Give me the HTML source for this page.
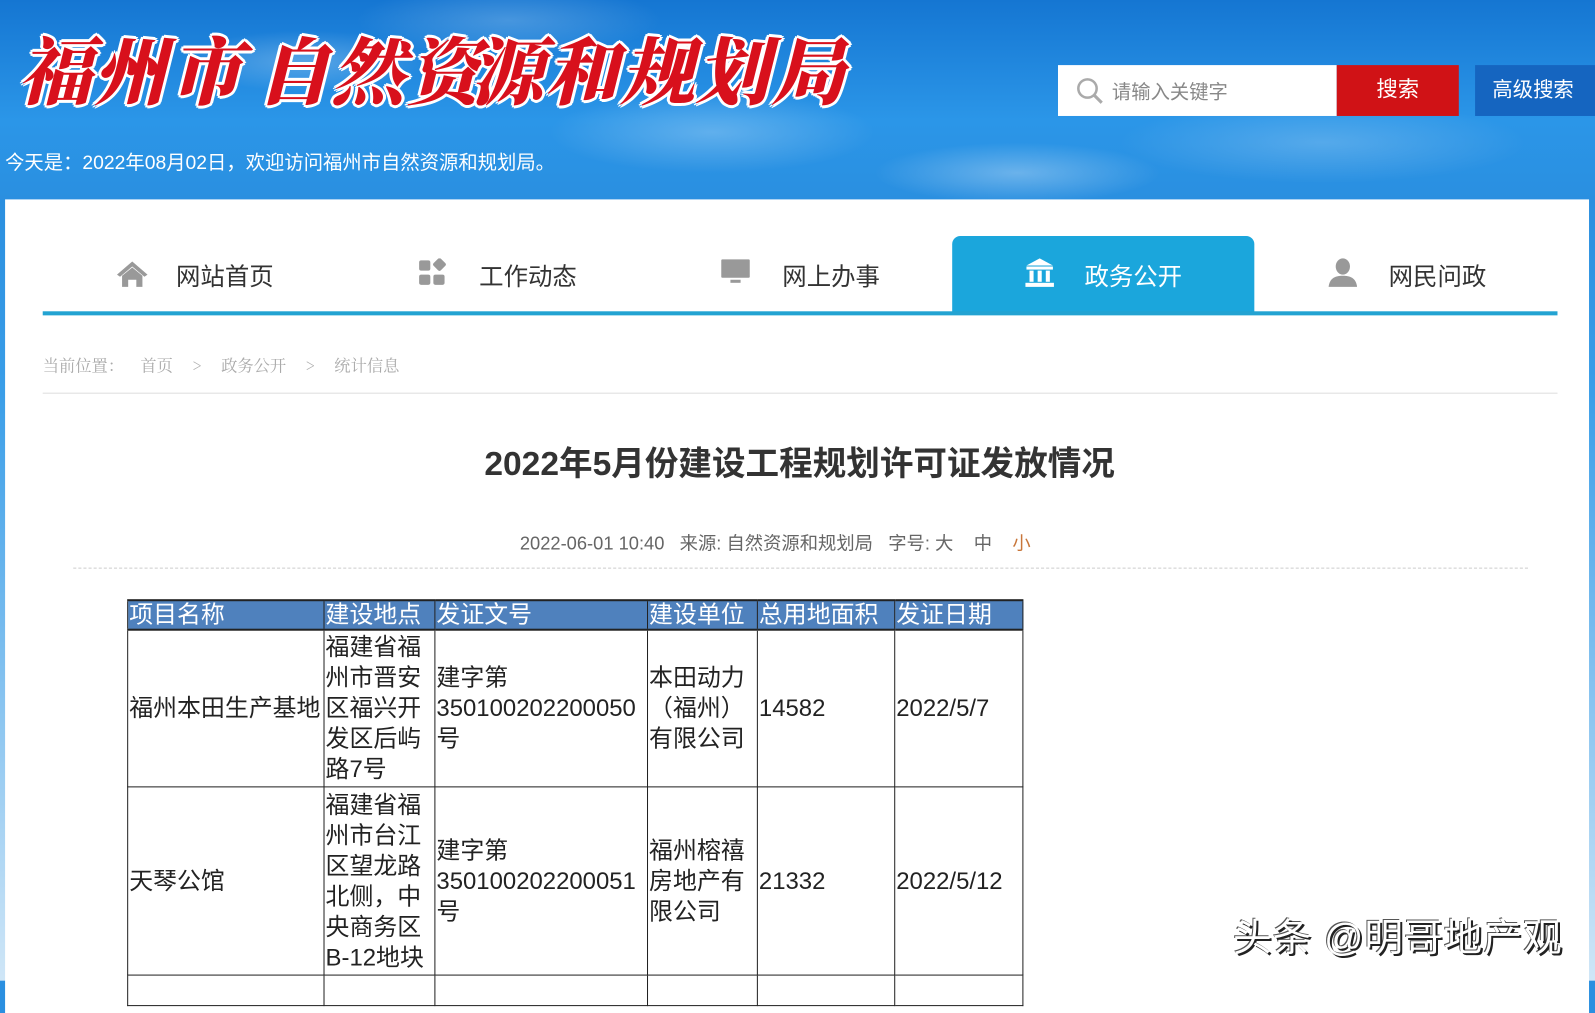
<!DOCTYPE html>
<html><head><meta charset="utf-8"><style>
*{margin:0;padding:0;box-sizing:border-box}
body{width:1595px;height:980px;overflow:hidden;position:relative;font-family:"Liberation Sans","Noto Sans CJK SC",sans-serif;background:#2a8fe0;}
#w{position:absolute;left:0;top:0;width:1568px;height:964px;transform:scale(1.0173);transform-origin:0 0;background:linear-gradient(180deg,#1a7fd6,#3a9ee8 40%,#cfe6f7);}
.hdr{position:absolute;left:0;top:0;width:1568px;height:197px;background:
radial-gradient(ellipse 120px 30px at 300px 60px,rgba(255,255,255,.25),transparent),
radial-gradient(ellipse 160px 40px at 700px 130px,rgba(255,255,255,.25),transparent),
radial-gradient(ellipse 140px 30px at 1000px 170px,rgba(255,255,255,.3),transparent),
radial-gradient(ellipse 200px 40px at 1300px 140px,rgba(255,255,255,.2),transparent),
radial-gradient(ellipse 150px 35px at 500px 20px,rgba(255,255,255,.2),transparent),
linear-gradient(180deg,#1576d2,#2b96e8 60%,#2a8fe0);}
.logo{position:absolute;top:14px;font-family:"Noto Serif CJK SC",serif;font-weight:900;font-size:72px;color:#d8101c;text-shadow:2px 2px 0 #fff,-2px -2px 0 #fff,2px -2px 0 #fff,-2px 2px 0 #fff,3px 0 0 #fff,-3px 0 0 #fff,0 3px 0 #fff,0 -3px 0 #fff;font-style:italic;letter-spacing:2px}
.today{position:absolute;left:5px;top:145px;color:#fff;font-size:19px}
.sbox{position:absolute;left:1040px;top:64px;width:274px;height:50px;background:#fff}
.sbox span{position:absolute;left:53px;top:12px;font-size:19px;color:#888}
.sbtn{position:absolute;left:1314px;top:64px;width:120px;height:50px;background:#d01216;color:#fff;font-size:21px;text-align:center;line-height:50px}
.adv{position:absolute;left:1450px;top:64px;width:145px;height:50px;background:#1565c0;color:#fff;font-size:20px;line-height:50px;padding-left:17px}
.main{position:absolute;left:5px;top:196px;width:1557px;height:800px;background:#fff}
.tab{position:absolute;top:252px;font-size:24px;color:#333}
.act{position:absolute;left:936px;top:232px;width:297px;height:76px;background:#1ba6dc;border-radius:8px 8px 0 0}
.uline{position:absolute;left:42px;top:306px;width:1489px;height:4px;background:#23a3d2}
.bc{position:absolute;left:42px;top:347px;font-family:"Noto Serif CJK SC",serif;font-size:16px;color:#aaa;word-spacing:0}
.bc i{font-style:normal;margin:0 19px}
.bl{position:absolute;left:42px;top:386px;width:1489px;height:1px;background:#ddd}
.title{position:absolute;left:0;width:1572px;text-align:center;top:429px;font-size:33px;font-weight:bold;color:#333}
.meta{position:absolute;left:511px;top:520px;font-size:18px;color:#666}
.dash{position:absolute;left:72px;top:558px;width:1430px;border-top:1px dashed #ccc}
table{position:absolute;left:125px;top:589px;border-collapse:collapse;font-size:23.5px;line-height:30px;color:#222}
td{border:1px solid #222;vertical-align:middle;padding:0 0 0 1px}
tr.h td{background:#4f81bd;color:#fff;height:29px;line-height:27px;border-top:2px solid #222;border-bottom:2px solid #222}
.wm{position:absolute;left:1212px;top:891px;font-size:38px;color:#fff;text-shadow:2px 2px 0 #222,-1px -1px 0 #555;letter-spacing:1px}
</style></head><body><div id="w">
<div class="hdr"></div>
<div class="logo" style="left:18px">福州市</div>
<div class="logo" style="left:252px">自然资</div>
<div class="logo" style="left:462px">源和规划局</div>
<div class="today">今天是：2022年08月02日，欢迎访问福州市自然资源和规划局。</div>
<div class="sbox"><svg style="position:absolute;left:18px;top:12px" width="28" height="28" viewBox="0 0 28 28"><circle cx="11" cy="11" r="9" fill="none" stroke="#aaa" stroke-width="2.5"/><line x1="17.5" y1="17.5" x2="25" y2="25" stroke="#aaa" stroke-width="3"/></svg><span>请输入关键字</span></div>
<div class="sbtn">搜索</div>
<div class="adv">高级搜索</div>
<div class="main"></div>
<div class="act"></div>
<svg style="position:absolute;left:113px;top:255px" width="34" height="28" viewBox="0 0 34 28"><path d="M17 2 L2 15 L5 17 L17 7 L29 17 L32 15 Z" fill="#999"/><path d="M7 16 L17 8 L27 16 V27 H21 V20 H13 V27 H7 Z" fill="#999"/></svg>
<div class="tab" style="left:173px">网站首页</div>
<svg style="position:absolute;left:411px;top:254px" width="28" height="28" viewBox="0 0 28 28"><rect x="1" y="2" width="11" height="10" rx="2" fill="#999"/><rect x="16" y="1" width="10" height="10" rx="2" fill="#999" transform="rotate(45 21 6)"/><rect x="1" y="16" width="11" height="10" rx="2" fill="#999"/><rect x="15" y="16" width="11" height="10" rx="2" fill="#999"/></svg>
<div class="tab" style="left:471px">工作动态</div>
<svg style="position:absolute;left:708px;top:254px" width="30" height="26" viewBox="0 0 30 26"><rect x="1" y="1" width="28" height="18" rx="1" fill="#999"/><rect x="10" y="21" width="10" height="3" fill="#999"/></svg>
<div class="tab" style="left:769px">网上办事</div>
<svg style="position:absolute;left:1007px;top:253px" width="30" height="30" viewBox="0 0 30 30"><path d="M15 1 L2 8 H28 Z" fill="#fff"/><rect x="2" y="9" width="26" height="3" fill="#fff"/><rect x="5" y="13" width="4" height="11" fill="#fff"/><rect x="13" y="13" width="4" height="11" fill="#fff"/><rect x="21" y="13" width="4" height="11" fill="#fff"/><rect x="1" y="25" width="28" height="4" fill="#fff"/></svg>
<div class="tab" style="left:1066px;color:#fff">政务公开</div>
<svg style="position:absolute;left:1305px;top:253px" width="30" height="30" viewBox="0 0 30 30"><ellipse cx="15" cy="9" rx="7" ry="8" fill="#999"/><path d="M1 29 C2 20 8 18 15 18 C22 18 28 20 29 29 Z" fill="#999"/></svg>
<div class="tab" style="left:1365px">网民问政</div>
<div class="uline"></div>
<div class="bc">当前位置：<i style="margin-left:6px;margin-right:10px"></i>首页<i>&gt;</i>政务公开<i>&gt;</i>统计信息</div>
<div class="bl"></div>
<div class="title">2022年5月份建设工程规划许可证发放情况</div>
<div class="meta">2022-06-01 10:40 &nbsp;&nbsp;来源: 自然资源和规划局 &nbsp;&nbsp;字号: 大 &nbsp;&nbsp;&nbsp;中 &nbsp;&nbsp;&nbsp;<span style="color:#c8763a">小</span></div>
<div class="dash"></div>
<table>
<tr class="h"><td style="width:193px">项目名称</td><td style="width:109px">建设地点</td><td style="width:209px">发证文号</td><td style="width:108px">建设单位</td><td style="width:135px">总用地面积</td><td style="width:126px">发证日期</td></tr>
<tr style="height:154px"><td>福州本田生产基地</td><td>福建省福州市晋安区福兴开发区后屿路7号</td><td>建字第350100202200050号</td><td>本田动力（福州）有限公司</td><td>14582</td><td>2022/5/7</td></tr>
<tr style="height:185px"><td>天琴公馆</td><td>福建省福州市台江区望龙路北侧，中央商务区B-12地块</td><td>建字第350100202200051号</td><td>福州榕禧房地产有限公司</td><td>21332</td><td>2022/5/12</td></tr>
<tr style="height:30px"><td></td><td></td><td></td><td></td><td></td><td></td></tr>
</table>
<div class="wm">头条 @明哥地产观</div>
</div></body></html>
